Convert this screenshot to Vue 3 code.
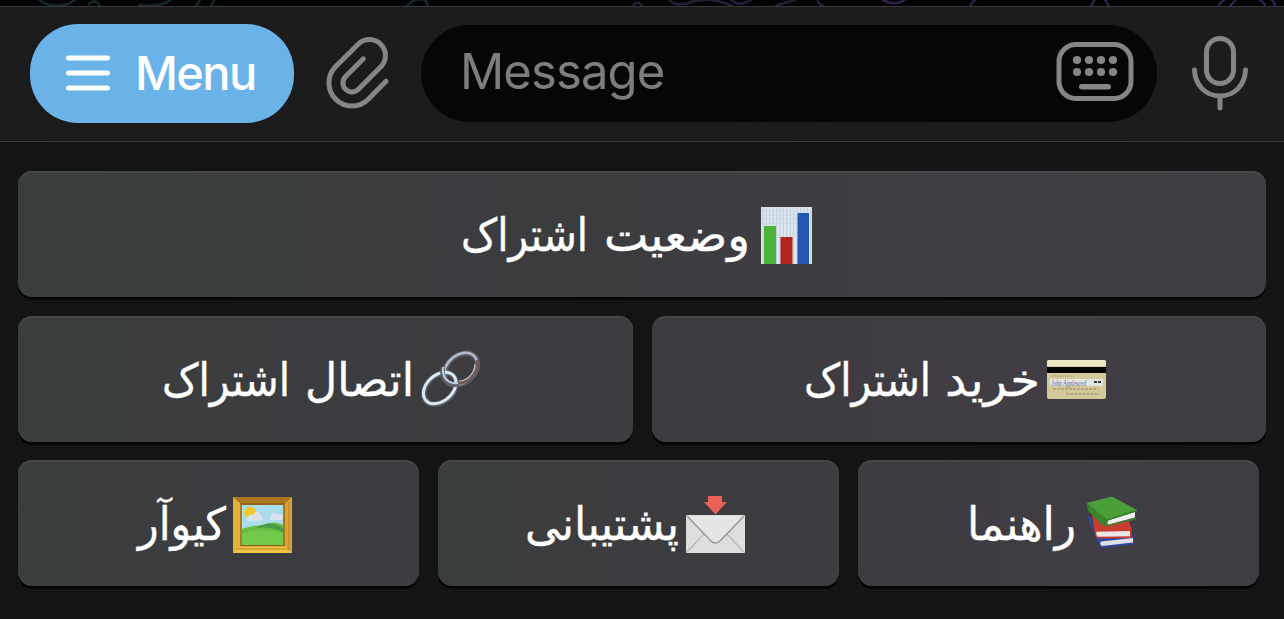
<script setup>
const rows = [
  [{ text: 'وضعیت اشتراک', icon: 'chart', width: 289, words: [146, 127] }],
  [
    { text: 'اتصال اشتراک', icon: 'link', width: 252, words: [109, 128] },
    { text: 'خرید اشتراک', icon: 'card', width: 236, words: [95, 127] }
  ],
  [
    { text: 'کیوآر', icon: 'frame', width: 88, words: [88] },
    { text: 'پشتیبانی', icon: 'mail', width: 154, words: [154] },
    { text: 'راهنما', icon: 'books', width: 109, words: [109] }
  ]
]
// The first word starts at the right edge, the second ends at the left edge.
const wordsOf = (key) =>
  key.text.split(' ').map((text, i) => ({
    text,
    width: key.words[i],
    x: i === 0 ? key.width : key.words[i]
  }))
const chartGrid = Array.from({ length: 15 }, (_, i) => 7 + i * 3.4)
</script>

<template>
  <main class="screen">
    <svg class="wallpaper" viewBox="0 0 1284 6" fill="none" stroke-width="2.5">
      <g stroke="#14282d">
        <path d="M37 -2Q48 9 68 4L80 -3M88 5q7-8 12 1M138 5q26 3 36-8M196 6l6-9M211 6l5-9M407 6q5-7 15-7q5 1 6 7" />
      </g>
      <g stroke="#202338">
        <path d="M633 6q5-7 9 0M668 -2q4 9 21 5q18-8 44 3M729 -2q10 11 23 1M775 6l26-8M817-2q1 7 7 8" />
      </g>
      <g stroke="#30204a">
        <path d="M880-2q14 10 26 1M970 6q5-10 14-7M1091 6l5-9M1104-2l5 8M1218 6q7-9 13-9M1230 6q4-4 7-8M1256-2q8 3 9 8M1268-2q6 2 7 8" />
      </g>
    </svg>

    <header class="composer">
      <button class="menu">
        <svg width="44" height="36" viewBox="0 0 44 36" fill="none" stroke="#fff" stroke-width="5" stroke-linecap="round">
          <path d="M2.5 3H41.5M2.5 18H41.5M2.5 33H41.5" />
        </svg>
        <span>Menu</span>
      </button>
      <svg class="clip" width="64" height="74" viewBox="0 0 64 74" fill="none" stroke="#858587" stroke-width="5" stroke-linecap="round" stroke-linejoin="round">
        <path d="M37.3 22.800L19.600 40.500A9 9 0 0 0 32.400 53.300L55.300 30.300A16 16 0 0 0 32.700 7.700L9.700 30.600A23 23 0 0 0 42.300 63.200L60 45.200" />
      </svg>
      <div class="field">
        <span>Message</span>
        <svg width="78" height="60" viewBox="0 0 78 60" fill="#858585">
          <rect x="3" y="2.500" width="72" height="54" rx="17" fill="none" stroke="#858585" stroke-width="5" />
          <g v-for="x in [21, 33, 45, 57]" :key="x">
            <circle :cx="x" cy="18" r="4.100" />
            <circle :cx="x" cy="30" r="4.100" />
          </g>
          <rect x="23" y="42" width="32" height="5.500" rx="2.750" />
        </svg>
      </div>
      <svg class="mic" width="56" height="75" viewBox="0 0 56 75" fill="none" stroke="#858587" stroke-width="5" stroke-linecap="round">
        <rect x="14.500" y="2.500" width="27" height="45" rx="13.500" />
        <path d="M2.500 34C3 49 13.500 60 28 60S53 49 53.500 34M28 60V72" />
      </svg>
    </header>

    <section class="keyboard">
      <div v-for="(row, i) in rows" :key="i" class="row" :class="'row' + i">
        <button v-for="key in row" :key="key.text" class="key">
          <svg class="emoji" :class="key.icon" viewBox="0 0 61 61">
            <g v-if="key.icon === 'chart'">
              <rect x="5" y="1" width="51" height="57" fill="#dfe7ee" />
              <path v-for="x in chartGrid" :key="x" :d="`M${x} 1V58`" stroke="#b8c7d5" stroke-width=".8" />
              <path d="M5 5H56M5 9H56M5 13H56M5 17H56" stroke="#c5d2df" stroke-width=".6" />
              <rect x="8" y="20" width="12" height="38" fill="#4db239" />
              <rect x="24.500" y="31" width="12" height="27" fill="#b2251f" />
              <rect x="41.500" y="7" width="11.500" height="51" fill="#2457b5" />
            </g>
            <g v-else-if="key.icon === 'link'" fill="none">
              <g stroke="#555b68" stroke-width="5.5">
                <ellipse cx="41" cy="19" rx="18.500" ry="13.500" transform="rotate(-42 41 19)" />
                <ellipse cx="20" cy="38.500" rx="18.500" ry="13" transform="rotate(-42 20 38.500)" />
              </g>
              <ellipse cx="40.700" cy="18.700" rx="18.500" ry="13.500" transform="rotate(-42 40.700 18.700)" stroke="#b1bac6" stroke-width="2.600" />
              <path d="M57 10Q60 20 51 28Q45 33 38 33" stroke="#6d5c58" stroke-width="4" />
              <path d="M55 14Q55 21 49 27Q44 31 39 31" stroke="#c9c1bd" stroke-width="1.200" />
              <ellipse cx="19.700" cy="38" rx="18.500" ry="13" transform="rotate(-42 19.700 38)" stroke="#dce9f4" stroke-width="3" />
              <path d="M23 17Q21 28 27 32Q32 36 38 34" stroke="#59606c" stroke-width="4.500" />
              <path d="M23 17Q22 27 28 31Q32 34 38 33" stroke="#c8d2dd" stroke-width="1.800" />
            </g>
            <g v-else-if="key.icon === 'card'">
              <rect x="1" y="10" width="59" height="39" rx="2" fill="#d3c99a" />
              <rect x="1" y="10" width="59" height="6" rx="2" fill="#eee9c4" />
              <rect x="1" y="17" width="59" height="6" fill="#050505" />
              <rect x="4" y="29" width="53" height="7" fill="#e4e4e0" />
              <path d="M5 26H28" stroke="#a79f79" stroke-width="1.500" stroke-dasharray="1 1" />
              <path d="M7 39H52M20 44H53" stroke="#b4aa80" stroke-width="2" stroke-dasharray="3 1" />
              <text x="5" y="35.500" direction="ltr" class="signature" textLength="35" lengthAdjust="spacingAndGlyphs">John Appleseed</text>
              <path d="M48 32h3m1 0h3" stroke="#353a38" stroke-width="2" />
            </g>
            <g v-else-if="key.icon === 'frame'">
              <path d="M1 2H60V58H1Z" fill="#d9a431" />
              <path d="M1 2L11 11V49L1 58Z" fill="#e3b43c" />
              <path d="M1 2H60L51 10H10Z" fill="#ad7620" />
              <path d="M1 58L10 50H51L60 58Z" fill="#f0c545" />
              <path d="M4 54H57V6" fill="none" stroke="#b98426" stroke-width="1" />
              <path d="M9 9V50.500H52V9Z" fill="none" stroke="#8a6018" stroke-width="1.300" />
              <rect x="10" y="10" width="41" height="40" fill="#a9ddec" />
              <circle cx="18" cy="17.500" r="6" fill="#f6c82e" />
              <path d="M15 24Q16 19 21 20Q26 12 30 22Q34 24 28 26H17Q14 26 15 24M38 23Q40 16 45 19L51 20V25H39Z" fill="#dbe1eb" />
              <path d="M10 34Q22 30 32 30Q42 25 51 30V50H10Z" fill="#69bd42" />
              <path d="M24 33Q38 24 51 33V37Q39 31 24 33" fill="#489c45" />
              <path d="M10 39Q26 32 51 38V50H10Z" fill="#73c94a" />
            </g>
            <g v-else-if="key.icon === 'mail'">
              <rect x="1" y="20" width="59" height="38" rx="1" fill="#dedede" />
              <path d="M2 57L20 38M59 57L41 38" stroke="#b8b8b8" stroke-width="1.300" />
              <path d="M2 21L25 45Q30 51 36 45L59 21Z" fill="#e6e6e6" />
              <path d="M2 21L25 45Q30 51 36 45L59 21" fill="none" stroke="#999" stroke-width="1.500" />
              <path d="M23 1H37V7H42L30.500 19.500L19 7H23Z" fill="#e96058" />
            </g>
            <g v-else>
              <path d="M5 21L9 22L14 42L51 39L52 41V49L19 53Q16 50 15 45Z" fill="#2c47a3" />
              <path d="M19 46.500L51 43V47.500L20 51Q17 49 19 46.500Z" fill="#dedee4" />
              <path d="M10 20L25 28L47 26L49.500 34V43L16 43.500Q13 42 12.500 36Z" fill="#c93c30" />
              <path d="M14.500 36.800L48 36V41.300L16 41.800Q13.500 40 14.500 36.800Z" fill="#ece6e4" />
              <path d="M4.700 8L30 1.500L55 15L25 25.500Z" fill="#4a9f39" />
              <path d="M4.700 8L25 24.500L25.500 31Q20 31 17 27L6 15.500Z" fill="#38852d" />
              <path d="M26 25.500L53 17V22.500L26.500 29.500Q24.500 28 26 25.500Z" fill="#eee" />
              <path d="M25 25L55 15.200M26 30.800L54 23.500" stroke="#37862e" stroke-width="1.600" />
            </g>
          </svg>
          <svg class="label" :width="key.width" height="60" lang="fa">
            <text v-for="word in wordsOf(key)" :key="word.text" :x="word.x" y="44.500" direction="rtl" :textLength="word.width" lengthAdjust="spacingAndGlyphs">{{ word.text }}</text>
          </svg>
        </button>
      </div>
    </section>
  </main>
</template>

<style>
body { margin: 0; background: #141415; }
</style>

<style scoped>
* { box-sizing: border-box; }
.screen { width: 1284px; height: 619px; overflow: hidden; background: linear-gradient(90deg, #131414, #151416); font-family: Inter, "Liberation Sans", sans-serif; }
.wallpaper { display: block; width: 1284px; height: 6px; background: #000; }
button { margin: 0; border: 0; font: inherit; }
.composer { display: flex; align-items: flex-start; height: 136px; padding: 18px 36px 0 30px; border-top: 1px solid #3a3a3c; border-bottom: 1px solid #3a3a3c; background: linear-gradient(90deg, #1b1b1c, #1c1c1e); }
.menu { display: flex; align-items: center; width: 264px; height: 99px; margin-top: -1px; padding: 0 0 2px 36px; border-radius: 48px; color: #fff; background: #69b3e9; }
.menu span { margin-left: 25px; font-size: 47px; font-weight: 500; line-height: 60px; letter-spacing: -1.6px; }
.clip { flex: none; margin: 11px 0 0 32px; }
.field { display: flex; align-items: center; justify-content: space-between; width: 736px; height: 97px; margin-left: 31px; padding: 0 23px 3px 39px; border-radius: 49px; color: #7d7d7d; background: #060606; }
.field span { font-size: 49px; line-height: 60px; letter-spacing: -0.9px; }
.mic { flex: none; margin: 11px 0 0 35px; }
.keyboard { display: flex; flex-direction: column; gap: 18.5px; padding: 29px 18px 0; }
.row { display: flex; gap: 19px; height: 126px; }
.row2 { padding-right: 7px; }
.key { display: flex; flex: 1 1 0; direction: rtl; align-items: center; justify-content: center; gap: 6px; min-width: 0; padding: 4px 7px 0 0; border-radius: 14px; color: #fff; background: linear-gradient(90deg, #3a3d3e, #3d3c40); box-shadow: inset 0 2px 1px #474749, 0 3px 0 #050505; }
.row0 .key { background: linear-gradient(90deg, #393d3d, #3c3c3f 48%, #403d44 75%, #3f3d42); }
.row1 .key:last-child, .row2 .key:last-child { background: linear-gradient(90deg, #3d3c40, #403d44 60%, #3f3d42); }
.emoji { flex: none; width: 61px; height: 61px; }
.label { flex: none; overflow: visible; }
.label text { fill: #fff; stroke: #fff; stroke-width: 0.4px; font-family: "DejaVu Sans", sans-serif; font-size: 45.5px; }
.signature { fill: #526aa4; font-family: "Liberation Serif", serif; font-size: 8px; font-style: italic; }
</style>
